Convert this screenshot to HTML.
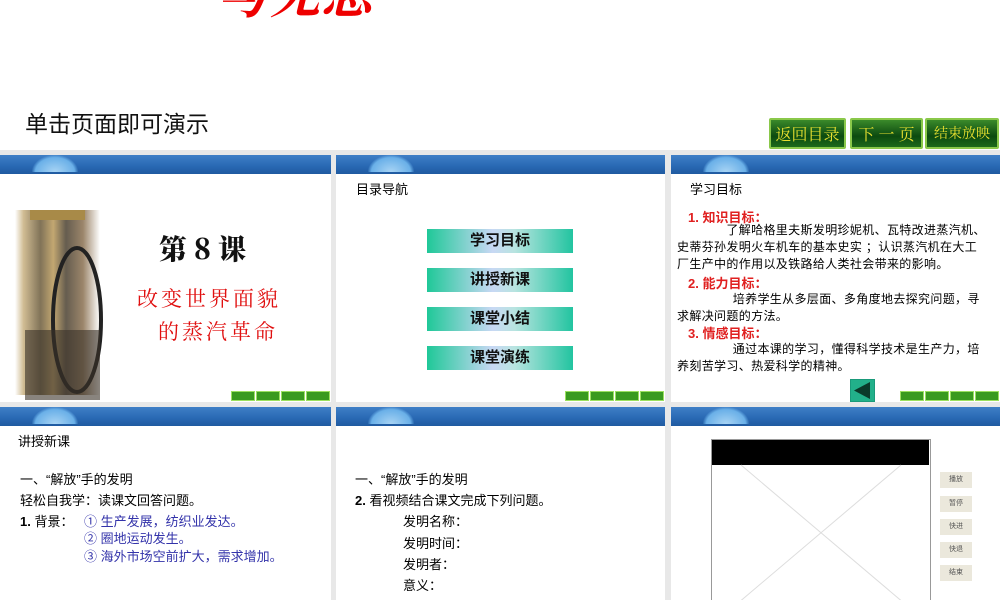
<!DOCTYPE html>
<html><head><meta charset="utf-8">
<style>
*{margin:0;padding:0;box-sizing:border-box}
body{width:1000px;height:600px;overflow:hidden;background:#fff;font-family:"Liberation Sans","Noto Sans CJK SC",sans-serif;position:relative}
.abs{position:absolute}
.top-red{left:218px;top:-44px;font-family:"Liberation Serif","Noto Serif CJK SC",serif;font-size:50px;color:#e00;font-weight:bold;letter-spacing:2px;font-style:italic}
.title{left:25px;top:105px;font-size:23px;color:#111}
.gbtn{top:118px;height:31px;background:linear-gradient(#3a8a2a,#0c4a10 60%,#1d6a1a);border:2px solid #8ac84a;color:#e8e030;font-family:"Noto Serif CJK SC",serif;font-size:16px;text-align:center;line-height:27px;border-radius:2px}
.bg{left:0;top:150px;width:1000px;height:450px;background:#e8e8e8}
.slide{background:#fff;overflow:hidden}
.hdr{position:absolute;left:0;top:0;width:100%;height:19px;background:linear-gradient(#3f7fc6,#2a6ab5 55%,#1f5aa0)}
.splash{position:absolute;left:32px;top:0;width:46px;height:17px;background:radial-gradient(ellipse at 50% 100%,#a8d4f4,#6ab0e8 60%,transparent 72%)}
.nav{position:absolute;right:1px;width:99px;height:10px;display:flex;gap:1px}
.nav span{flex:1;background:#3a9a20;border:1px solid #9ce060}
.menu{position:absolute;left:91px;width:146px;height:24px;background:linear-gradient(90deg,#1fc898,#c8d8f4 45%,#b8e4e0 60%,#22c4a0);font-size:15px;font-weight:bold;text-align:center;line-height:24px;color:#111}
.t{position:absolute;white-space:nowrap}
.red{color:#e02020;font-weight:bold}
.blue{color:#3333aa}
.ctl{position:absolute;left:269px;width:32px;height:16px;background:#ebe8dc;font-size:7px;text-align:center;line-height:16px;color:#555}
.p{position:absolute;left:6px;font-size:12px;line-height:17px;letter-spacing:0.35px;white-space:nowrap}
</style></head><body>
<div class="abs top-red">与无忌</div>
<div class="abs title">单击页面即可演示</div>
<div class="abs gbtn" style="left:769px;width:77px">返回目录</div>
<div class="abs gbtn" style="left:850px;width:73px">下 一 页</div>
<div class="abs gbtn" style="left:925px;width:74px;font-size:14px">结束放映</div>
<div class="abs bg"></div>

<!-- slide 1 -->
<div class="abs slide" style="left:0;top:155px;width:331px;height:247px">
<div class="hdr"><div class="splash"></div></div>
<div class="t" style="left:15px;top:55px;width:85px;height:185px;background:linear-gradient(90deg,#fff 0,#c8b080 10%,#6a5a3a 30%,#b89858 45%,#4a4030 60%,#8a7050 80%,#fff 100%);opacity:.85"></div>
<svg class="t" style="left:15px;top:55px" width="90" height="190"><ellipse cx="62" cy="110" rx="24" ry="72" fill="none" stroke="#222" stroke-width="4"/><rect x="10" y="120" width="75" height="70" fill="#3a3228" opacity=".6"/><rect x="15" y="0" width="55" height="10" fill="#a88a48"/></svg>
<div class="t" style="left:159px;top:73px;font-size:28px;font-weight:900;color:#111;font-family:'Noto Serif CJK SC',serif">第 8 课</div>
<div class="t red" style="left:137px;top:128px;font-size:21px;letter-spacing:3px;font-family:'Noto Serif CJK SC',serif;font-weight:normal;color:#e01010">改变世界面貌</div>
<div class="t red" style="left:158px;top:161px;font-size:21px;letter-spacing:3px;font-family:'Noto Serif CJK SC',serif;font-weight:normal;color:#e01010">的蒸汽革命</div>
<div class="nav" style="top:236px"><span></span><span></span><span></span><span></span></div>
</div>

<!-- slide 2 -->
<div class="abs slide" style="left:336px;top:155px;width:329px;height:247px">
<div class="hdr"><div class="splash"></div></div>
<div class="t" style="left:20px;top:24px;font-size:13px">目录导航</div>
<div class="menu" style="top:74px">学习目标</div>
<div class="menu" style="top:113px">讲授新课</div>
<div class="menu" style="top:152px">课堂小结</div>
<div class="menu" style="top:191px">课堂演练</div>
<div class="nav" style="top:236px"><span></span><span></span><span></span><span></span></div>
</div>

<!-- slide 3 -->
<div class="abs slide" style="left:671px;top:155px;width:329px;height:247px">
<div class="hdr"><div class="splash"></div></div>
<div class="t" style="left:19px;top:24px;font-size:13px">学习目标</div>
<div class="t red" style="left:17px;top:52px;font-size:13px">1. 知识目标：</div>
<div class="p" style="top:67px">&emsp;&emsp;&emsp;&emsp;了解哈格里夫斯发明珍妮机、瓦特改进蒸汽机、<br>史蒂芬孙发明火车机车的基本史实 ；认识蒸汽机在大工<br>厂生产中的作用以及铁路给人类社会带来的影响。</div>
<div class="t red" style="left:17px;top:118px;font-size:13px">2. 能力目标：</div>
<div class="p" style="top:136px">&emsp;&emsp;&emsp;&emsp;&ensp;培养学生从多层面、多角度地去探究问题，寻<br>求解决问题的方法。</div>
<div class="t red" style="left:17px;top:168px;font-size:13px">3. 情感目标：</div>
<div class="p" style="top:186px">&emsp;&emsp;&emsp;&emsp;&ensp;通过本课的学习，懂得科学技术是生产力，培<br>养刻苦学习、热爱科学的精神。</div>
<svg class="t" style="left:179px;top:224px" width="25" height="23"><rect width="25" height="23" fill="#1a9a7a"/><rect x="1" y="1" width="23" height="21" fill="#22b08a"/><polygon points="4,11.5 20,3 20,20" fill="#0a3a2a"/></svg>
<div class="nav" style="top:236px"><span></span><span></span><span></span><span></span></div>
</div>

<!-- slide 4 -->
<div class="abs slide" style="left:0;top:407px;width:331px;height:193px">
<div class="hdr"><div class="splash"></div></div>
<div class="t" style="left:18px;top:24px;font-size:13px">讲授新课</div>
<div class="t" style="left:20px;top:62px;font-size:13px">一、“解放”手的发明</div>
<div class="t" style="left:20px;top:83px;font-size:13px">轻松自我学：读课文回答问题。</div>
<div class="t" style="left:20px;top:104px;font-size:13px"><b>1.</b> 背景：</div>
<div class="t blue" style="left:84px;top:104px;font-size:13px">① 生产发展，纺织业发达。</div>
<div class="t blue" style="left:84px;top:121px;font-size:13px">② 圈地运动发生。</div>
<div class="t blue" style="left:84px;top:139px;font-size:13px">③ 海外市场空前扩大，需求增加。</div>
</div>

<!-- slide 5 -->
<div class="abs slide" style="left:336px;top:407px;width:329px;height:193px">
<div class="hdr"><div class="splash"></div></div>
<div class="t" style="left:19px;top:62px;font-size:13px">一、“解放”手的发明</div>
<div class="t" style="left:19px;top:83px;font-size:13px"><b>2.</b> 看视频结合课文完成下列问题。</div>
<div class="t" style="left:67px;top:104px;font-size:13px">发明名称：</div>
<div class="t" style="left:67px;top:126px;font-size:13px">发明时间：</div>
<div class="t" style="left:67px;top:147px;font-size:13px">发明者：</div>
<div class="t" style="left:67px;top:168px;font-size:13px">意义：</div>
</div>

<!-- slide 6 -->
<div class="abs slide" style="left:671px;top:407px;width:329px;height:193px">
<div class="hdr"><div class="splash"></div></div>
<svg class="t" style="left:40px;top:32px" width="220" height="170"><rect x="0.5" y="0.5" width="219" height="170" fill="#fff" stroke="#999"/><rect x="1" y="1" width="217" height="25" fill="#000"/><line x1="30" y1="26" x2="200" y2="170" stroke="#ddd"/><line x1="190" y1="26" x2="20" y2="170" stroke="#ddd"/></svg>
<div class="ctl" style="top:65px">播放</div>
<div class="ctl" style="top:89px">暂停</div>
<div class="ctl" style="top:112px">快进</div>
<div class="ctl" style="top:135px">快退</div>
<div class="ctl" style="top:158px">结束</div>
</div>
</body></html>
